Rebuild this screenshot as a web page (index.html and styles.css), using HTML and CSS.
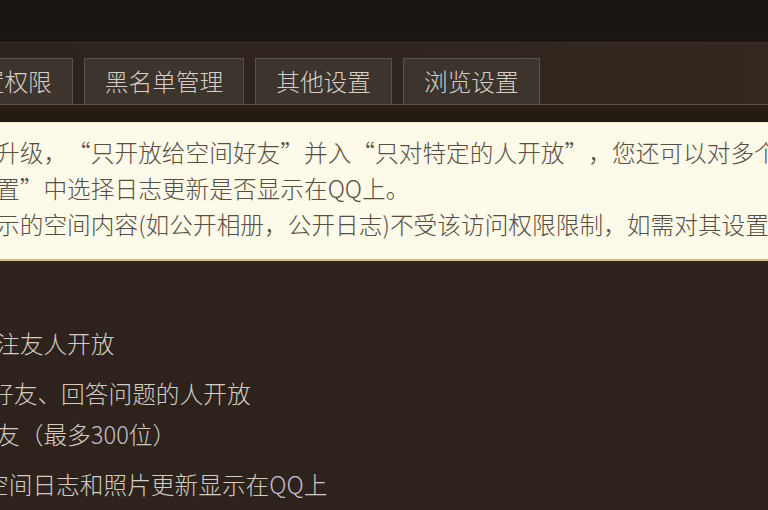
FILE: index.html
```html
<!DOCTYPE html>
<html lang="zh-CN">
<head>
<meta charset="utf-8">
<title>空间设置</title>
<link rel="stylesheet" href="styles.css">
</head>
<body>
<div class="page">
  <div class="top"></div>
  <div class="tabbar">
    <div class="tabs">
      <div class="tab">设置权限</div>
      <div class="tab">黑名单管理</div>
      <div class="tab">其他设置</div>
      <div class="tab">浏览设置</div>
    </div>
  </div>
  <div class="band"></div>
  <div class="notice">
    <div class="nline">升级<span class="qr">，</span><span class="ql">“</span>只开放给空间好友<span class="qr">”</span>并入<span class="ql">“</span>只对特定的人开放<span class="qr">”</span><span class="qr">，</span>您还可以对多个</div>
    <div class="nline">置<span class="qr">”</span>中选择日志更新是否显示在QQ上。</div>
    <div class="nline">示的空间内容(如公开相册<span class="qr">，</span>公开日志)不受该访问权限限制<span class="qr">，</span>如需对其设置</div>
  </div>
  <div class="opts">
    <div class="opt">
      <div class="oline">注友人开放</div>
    </div>
    <div class="opt sub">
      <div class="oline">好友<span class="qr">、</span>回答问题的人开放</div>
      <div class="oline ind">友<span class="ql">（</span>最多<span class="num">300</span>位<span class="qr">）</span></div>
    </div>
    <div class="opt sub">
      <div class="oline last">空间日志和照片更新显示在<span class="num">QQ</span>上</div>
    </div>
  </div>
</div>
</body>
</html>
```

FILE: styles.css
```css
html, body {
  margin: 0;
  padding: 0;
  overflow: hidden;
  background: #2d231c;
}
.page {
  width: 768px;
  height: 510px;
  overflow: hidden;
  font-family: "Noto Sans CJK SC", "Noto Sans", sans-serif;
  font-size: 23.7px;
  font-weight: 300;
  background: #2d231c;
}
.top {
  height: 42px;
  background: linear-gradient(#1a1411, #1c1613);
}
.tabbar {
  height: 61px;
  border-top: 1px solid #3d332b;
  border-bottom: 1px solid #5e544b;
  background: linear-gradient(90deg, #2c231d, #33271f);
}
.tabs {
  display: flex;
  gap: 11px;
  margin-left: -64px;
  padding-top: 15px;
}
.tab {
  height: 45px;
  padding: 0 20px;
  line-height: 45px;
  color: #d6cfc6;
  background: #3d342d;
  border: 1px solid #5c524a;
  border-bottom: none;
  white-space: nowrap;
}
.band {
  height: 17px;
  background: linear-gradient(#2a2019, #22190f);
}
.notice {
  background: #fdfae9;
  border-top: 1px solid #efe7c9;
  border-bottom: 2px solid #cdbf92;
  box-shadow: 0 1px 0 #3b2c14;
  padding: 11px 0 17px;
  color: #584e44;
  line-height: 36px;
}
.nline {
  margin-left: -4px;
  white-space: nowrap;
}
.ql,
.qr {
  display: inline-block;
  width: 1em;
}
.ql {
  text-align: right;
}
.qr {
  text-align: left;
}
.opts {
  display: flex;
  flex-direction: column;
  gap: 9px;
  padding-top: 62px;
  color: #d3ccc3;
  line-height: 41px;
}
.oline {
  margin-left: -4px;
  white-space: nowrap;
}
.sub .oline {
  margin-left: -10px;
}
.sub .oline.ind {
  margin-left: -4px;
}
.sub .oline.last {
  margin-left: -15px;
}
.num {
  color: #c4bccb;
}
```
